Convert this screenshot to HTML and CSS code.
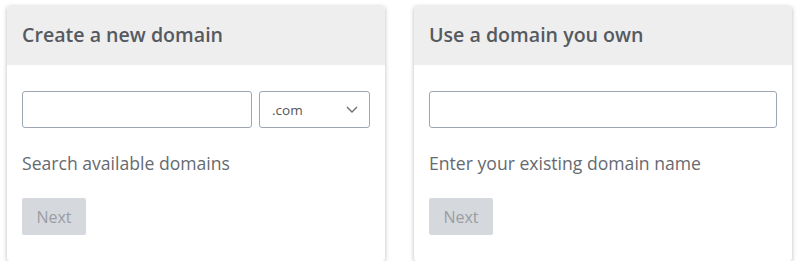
FILE: index.html
```html
<!DOCTYPE html>
<html>
<head>
<meta charset="utf-8">
<link rel="stylesheet" href="styles.css">
</head>
<body>
<div class="cards">
  <section class="card">
    <header class="card-head"><h2>Create a new domain</h2></header>
    <div class="card-body">
      <div class="row">
        <input class="field grow" type="text">
        <div class="select"><span>.com</span>
          <svg width="12" height="7" viewBox="0 0 12 7"><path d="M1 1l5 5 5-5" fill="none" stroke="#6b6b6b" stroke-width="1.3"/></svg>
        </div>
      </div>
      <p class="help">Search available domains</p>
      <button class="btn">Next</button>
    </div>
  </section>
  <section class="card">
    <header class="card-head"><h2>Use a domain you own</h2></header>
    <div class="card-body">
      <div class="row">
        <input class="field grow" type="text">
      </div>
      <p class="help">Enter your existing domain name</p>
      <button class="btn">Next</button>
    </div>
  </section>
</div>
</body>
</html>
```
FILE: styles.css
```css
html, body { margin: 0; padding: 0; background: #fff; }
body { font-family: "Open Sans", "Liberation Sans", sans-serif; }
.cards {
  display: flex;
  gap: 29px;
  padding: 6px 8px 0 7px;
}
.card {
  width: 378px;
  height: 255px;
  box-sizing: border-box;
  background: #fff;
  border-radius: 3px;
  box-shadow: 0 1px 4px rgba(0,0,0,0.28);
  overflow: hidden;
  display: flex;
  flex-direction: column;
}
.card-head {
  background: #eeeeee;
  height: 59px;
  box-sizing: border-box;
  padding: 0 15px;
  display: flex;
  align-items: center;
}
.card-head h2 {
  margin: 0;
  font-size: 19.6px;
  font-weight: 600;
  color: #555a60;
  position: relative;
  top: -1px;
}
.card-body { padding: 26px 15px 0 15px; }
.row { display: flex; gap: 7px; }
.field {
  height: 37px;
  box-sizing: border-box;
  border: 1px solid #9ea6b4;
  border-radius: 3px;
  background: #fff;
  margin: 0;
  padding: 0 10px;
}
.grow { flex: 1; min-width: 0; }
.select {
  width: 111px;
  height: 37px;
  box-sizing: border-box;
  border: 1px solid #9ea6b4;
  border-radius: 3px;
  display: flex;
  align-items: center;
  justify-content: space-between;
  padding: 0 11px 0 12px;
  font-size: 13.5px;
  color: #555;
}
.help {
  margin: 22px 0 0 0;
  font-size: 17.6px;
  line-height: 26px;
  color: #666a70;
}
.btn {
  margin-top: 22px;
  width: 64px;
  height: 37px;
  border: none;
  border-radius: 2px;
  background: #d5d8dd;
  color: #9a9da2;
  font-family: "Open Sans", "Liberation Sans", sans-serif;
  font-size: 16px;
  padding: 0;
}
```
